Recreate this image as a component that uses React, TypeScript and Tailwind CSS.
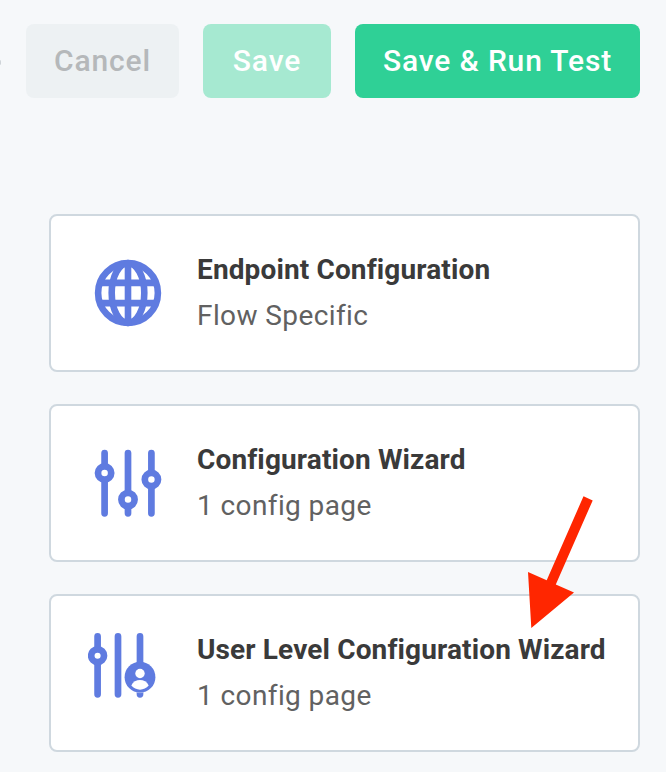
import type { ReactNode } from "react";

const BLUE = "#5f7be0";

function GlobeIcon() {
  return (
    <svg viewBox="94 259 68 68" className="h-[68px] w-[68px]" fill="none" stroke={BLUE} strokeWidth="6.6">
      <circle cx="128" cy="293" r="29.9" />
      <ellipse cx="128" cy="293" rx="16.3" ry="29.9" />
      <path d="M128 262v62M101 282.9h54M101 303.1h54" />
    </svg>
  );
}

function SlidersIcon() {
  return (
    <svg viewBox="94 449 68 68" className="h-[68px] w-[68px]" fill="white" stroke={BLUE} strokeWidth="6.7" strokeLinecap="round">
      <path d="M104.6 453v60.3M128 453v60.3M151.4 453v60.3" />
      <circle cx="104.6" cy="473" r="6.6" />
      <circle cx="128" cy="499.6" r="6.6" />
      <circle cx="151.4" cy="479.5" r="6.6" />
    </svg>
  );
}

function UserSlidersIcon() {
  return (
    <svg viewBox="88 632 68 68" className="h-[68px] w-[68px]" fill="white">
      <g stroke={BLUE} strokeWidth="6.7" strokeLinecap="round">
        <path d="M97.6 636.4v57.9M118 636.4v57.9M140 636.4v57.9" />
        <circle cx="97.6" cy="655.7" r="6.4" />
      </g>
      <circle cx="140" cy="677.2" r="15.4" fill={BLUE} />
      <path d="M136.5 692.4Q140 693 143.5 692.4" fill="none" stroke="white" strokeOpacity="0.45" strokeWidth="0.8" />
      <circle cx="140" cy="673.5" r="4.7" />
      <path d="M131.3 685.6C134.5 678.3 145.5 678.3 148.7 685.6C144.3 691 135.7 691 131.3 685.6Z" />
    </svg>
  );
}

function Card({ icon, title, subtitle, iconClass }: { icon: ReactNode; title: string; subtitle: string; iconClass: string }) {
  return (
    <section className="flex h-[158px] w-[591px] rounded-lg border-2 border-[#cfd8df] bg-white">
      <div className={iconClass}>{icon}</div>
      <div className="pt-[31px] whitespace-nowrap">
        <h2 className="text-[28px] leading-[46px] font-bold tracking-[0.13px] text-[#3a3a3a]">{title}</h2>
        <p className="text-[28px] leading-[46px] tracking-[0.4px] text-[#616161]">{subtitle}</p>
      </div>
    </section>
  );
}

export default function App() {
  return (
    <main className="relative h-[772px] w-[666px] overflow-hidden bg-[#f6f8fa] font-['Roboto',sans-serif]">
      <div className="absolute top-[60px] left-[-2px] h-[5px] w-[3px] rounded-full bg-[#cfd4d8]" />
      <header className="flex gap-6 pt-6 pl-[26px] text-[30px] font-medium tracking-[0.85px] whitespace-nowrap">
        <button className="h-[74px] w-[153px] rounded-lg bg-[#edf1f3] pb-0.5 text-[#b5b8ba]">Cancel</button>
        <button className="h-[74px] w-32 rounded-lg bg-[#a6e9d1] pb-0.5 text-white">Save</button>
        <button className="h-[74px] w-[285px] rounded-lg bg-[#2fd096] pb-0.5 text-white">Save &amp; Run Test</button>
      </header>
      <div className="flex flex-col gap-8 pt-[116px] pl-[49px]">
        <Card icon={<GlobeIcon />} title="Endpoint Configuration" subtitle="Flow Specific" iconClass="w-[146px] pt-[43px] pl-[43px]" />
        <Card icon={<SlidersIcon />} title="Configuration Wizard" subtitle="1 config page" iconClass="w-[146px] pt-[43px] pl-[43px]" />
        <Card icon={<UserSlidersIcon />} title="User Level Configuration Wizard" subtitle="1 config page" iconClass="w-[146px] pt-9 pl-[37px]" />
      </div>
      <svg className="absolute top-[490px] left-[520px] h-[145px] w-20" viewBox="520 490 80 145">
        <path d="M583.5 496.3L592.7 500.4L555.8 584.5L574 592.4L531.3 628L528 572L546.7 580.2Z" fill="#ff2600" />
      </svg>
    </main>
  );
}
